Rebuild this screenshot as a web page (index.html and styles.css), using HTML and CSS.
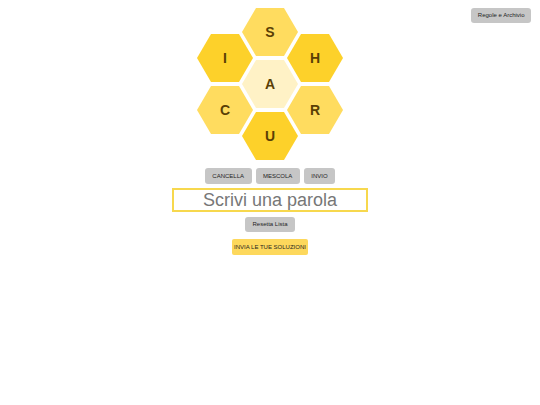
FILE: index.html
```html
<!DOCTYPE html>
<html lang="it">
<head>
<meta charset="utf-8">
<title>Alveare</title>
<link rel="stylesheet" href="styles.css">
</head>
<body>
<div class="page">
  <div class="side"></div>
  <main class="game">
    <svg class="hive" width="150" height="156" viewBox="0 0 150 156" xmlns="http://www.w3.org/2000/svg">
      <g class="cell light"><polygon points="47,26 61,2 89,2 103,26 89,50 61,50"/><text x="75" y="31">S</text></g>
      <g class="cell dark"><polygon points="2,52 16,28 44,28 58,52 44,76 16,76"/><text x="30" y="57">I</text></g>
      <g class="cell dark"><polygon points="92,52 106,28 134,28 148,52 134,76 106,76"/><text x="120" y="57">H</text></g>
      <g class="cell center"><polygon points="47,78 61,54 89,54 103,78 89,102 61,102"/><text x="75" y="83">A</text></g>
      <g class="cell light"><polygon points="2,104 16,80 44,80 58,104 44,128 16,128"/><text x="30" y="109">C</text></g>
      <g class="cell light"><polygon points="92,104 106,80 134,80 148,104 134,128 106,128"/><text x="120" y="109">R</text></g>
      <g class="cell dark"><polygon points="47,130 61,106 89,106 103,130 89,154 61,154"/><text x="75" y="135">U</text></g>
    </svg>
    <div class="actions">
      <button class="btn">CANCELLA</button>
      <button class="btn">MESCOLA</button>
      <button class="btn">INVIO</button>
    </div>
    <div class="word">Scrivi una parola</div>
    <button class="btn reset">Resetta Lista</button>
    <button class="btn submit">INVIA LE TUE SOLUZIONI</button>
  </main>
  <div class="side right">
    <button class="btn rules">Regole e Archivio</button>
  </div>
</div>
</body>
</html>
```
FILE: styles.css
```css
html, body {
  margin: 0;
  padding: 0;
  background: #ffffff;
  font-family: "Liberation Sans", Arial, sans-serif;
}

.page {
  display: grid;
  grid-template-columns: 1fr auto 1fr;
  width: 540px;
  height: 405px;
}

.side.right {
  display: flex;
  justify-content: flex-end;
  align-items: flex-start;
  padding: 8px 9px 0 0;
}

.game {
  display: flex;
  flex-direction: column;
  align-items: center;
  padding-top: 6px;
  width: 196px;
}

.hive {
  display: block;
}

.cell polygon {
  stroke: none;
}

.cell.dark polygon { fill: #fdd12a; }
.cell.light polygon { fill: #ffdc5f; }
.cell.center polygon { fill: #fff2c6; }

.cell text {
  font-family: "Liberation Sans", Arial, sans-serif;
  font-weight: bold;
  font-size: 14px;
  fill: #5a3f05;
  text-anchor: middle;
}

.actions {
  display: flex;
  gap: 4px;
  margin-top: 6px;
}

.btn {
  font-family: "Liberation Sans", Arial, sans-serif;
  font-size: 6px;
  color: #1e1e1e;
  background: #c6c6c6;
  border: none;
  border-radius: 3px;
  padding: 0 7.5px;
  height: 16px;
  line-height: 16px;
  margin: 0;
  cursor: pointer;
}

.word {
  box-sizing: border-box;
  width: 196px;
  height: 24px;
  margin-top: 4px;
  border: 2px solid #f7d84e;
  color: #777777;
  font-size: 18px;
  line-height: 20px;
  text-align: center;
}

.reset {
  margin-top: 5px;
  height: 15px;
  line-height: 15px;
  padding: 0 7px;
}

.submit {
  margin-top: 7px;
  height: 16px;
  line-height: 16px;
  padding: 0 2px;
  background: #fdd85c;
  border-radius: 2px;
}

.rules {
  height: 15px;
  line-height: 15px;
  padding: 0 6.5px;
}
```
